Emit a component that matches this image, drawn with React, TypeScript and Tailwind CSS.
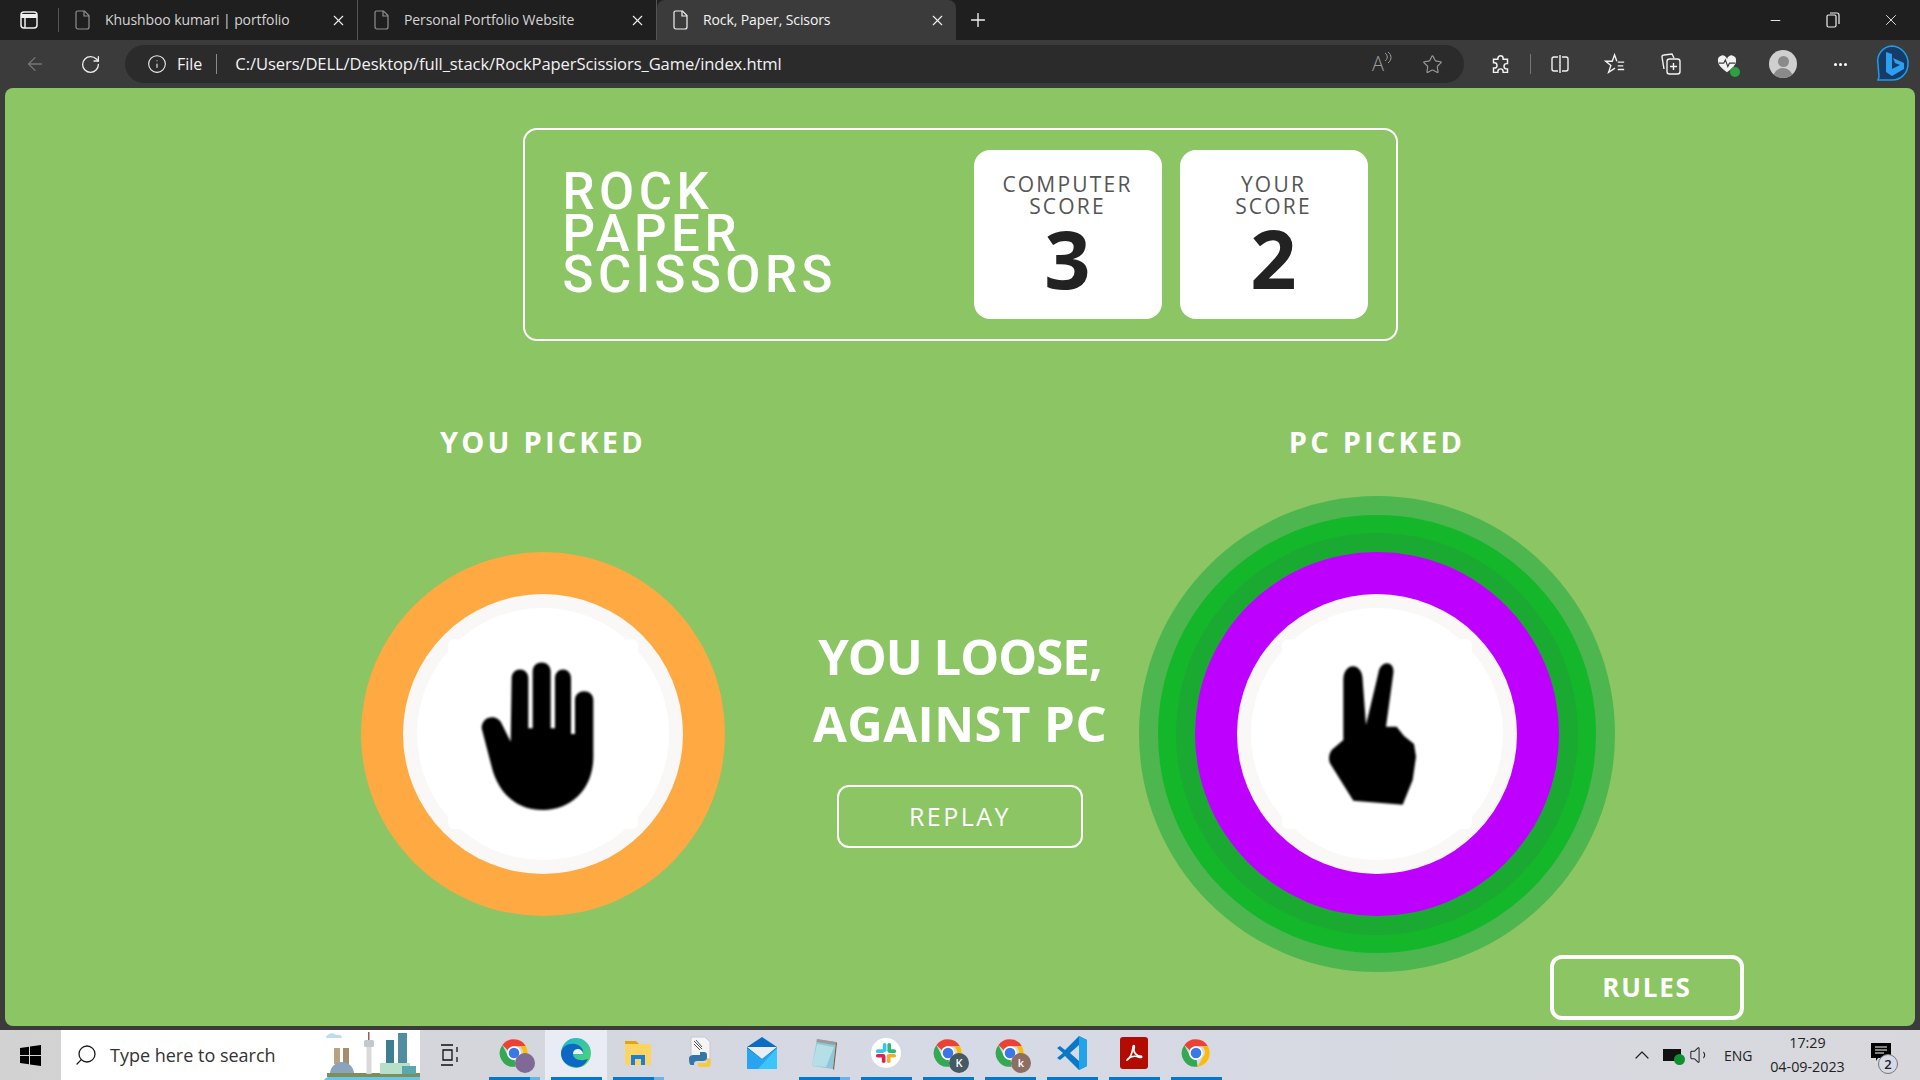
import { ArrowLeft, ChevronUp, Info, Minus, Plus, RotateCw, Search, Star, Volume1, X } from "lucide-react";

const tabs = [
  { title: "Khushboo kumari | portfolio", active: false },
  { title: "Personal Portfolio Website", active: false },
  { title: "Rock, Paper, Scisors", active: true },
];

const PageIcon = ({ active }: { active: boolean }) => (
  <svg width="16" height="20" viewBox="0 0 16 20" fill="none" stroke={active ? "#f2f2f2" : "#8f8f8f"} strokeWidth="1.2">
    <path d="M2.5 1h7l4.5 4.5V17a2 2 0 0 1-2 2H3a2 2 0 0 1-2-2V2.5A1.5 1.5 0 0 1 2.5 1z" />
    <path d="M9 1v5h5" />
  </svg>
);

const Tab = ({ title, active }: { title: string; active: boolean }) => (
  <div
    className={`w-[299px] h-10 flex items-center pl-4 pr-[10px] text-[14px] font-['Open_Sans',sans-serif] ${
      active ? "bg-[#3b3b3b] rounded-t-lg text-[#f4f4f4]" : "text-[#d4d4d4] border-r border-[#555555]"
    }`}
  >
    <PageIcon active={active} />
    <span className="ml-[14px] flex-1 truncate tracking-[-0.1px] pb-[2px]">{title}</span>
    <X size={17} strokeWidth={1.5} className="text-[#f0f0f0]" />
  </div>
);

const ToolCell = ({ children, w = "w-[56px]" }: { children: React.ReactNode; w?: string }) => (
  <div className={`${w} h-full flex items-center justify-center shrink-0`}>{children}</div>
);

const ChromeIcon = ({ badge, badgeColor }: { badge?: string; badgeColor?: string }) => (
  <div className="relative w-[30px] h-[36px] flex items-center justify-center">
    <svg width="30" height="30" viewBox="0 0 48 48">
      <path d="M24 2a22 22 0 0 1 19 11H24a11 11 0 0 0-10 6.5L5.5 11A22 22 0 0 1 24 2z" fill="#ea4335" />
      <path d="M43 13a22 22 0 0 1-16.500 32.800L35.500 30A11 11 0 0 0 33 13z" fill="#fbbc04" />
      <path d="M26.500 45.800A22 22 0 0 1 5.500 11L14.500 29A11 11 0 0 0 25 35z" fill="#34a853" />
      <circle cx="24" cy="24" r="11" fill="#fff" />
      <circle cx="24" cy="24" r="8.500" fill="#3b78e7" />
    </svg>
    {badge !== undefined && (
      <span
        className={`absolute right-[-6px] bottom-[-2px] w-5 h-5 rounded-full flex items-center justify-center text-[11px] text-white font-['Open_Sans',sans-serif] font-semibold ${badgeColor}`}
      >
        {badge}
      </span>
    )}
  </div>
);

const EdgeIcon = () => (
  <svg width="32" height="32" viewBox="0 0 32 32">
    <defs>
      <linearGradient id="edgeTop" x1="0" y1="0" x2="1" y2="1">
        <stop offset="0" stopColor="#1fb5d6" />
        <stop offset="1" stopColor="#54d66a" />
      </linearGradient>
    </defs>
    <circle cx="16" cy="16" r="15" fill="url(#edgeTop)" />
    <path d="M1 16C2 9 9 6 15 7c6 1 9 6 8 10H13c0 4 5 7 11 6l4-1c-3 6-8 9-13 8C7 29 1 24 1 16z" fill="#0c68c4" />
    <path d="M13 17c0-4 3-5 5-5s5 2 5 5z" fill="#e9f1fa" />
  </svg>
);

const FolderIcon = () => (
  <svg width="30" height="32" viewBox="0 0 30 32">
    <path d="M2 4h11l3 3H2z" fill="#e5a50a" />
    <rect x="2" y="7" width="26" height="21" rx="1.500" fill="#fcd462" />
    <path d="M8 28V18h14v10h-4v-6h-6v6z" fill="#1c7ed6" />
  </svg>
);

const PythonFile = () => (
  <svg width="30" height="36" viewBox="0 0 30 36">
    <path d="M6 2h14l5 5v18H6z" fill="#f4f4f4" stroke="#c8c8c8" />
    <path d="M9 6l8 8M11 5l6 7M9 9l6 6" stroke="#555" strokeWidth="1" />
    <path d="M4 24c0-3 2-4 5-4h6v-3h4c2 0 3 1 3 3v3c0 2-2 3-4 3h-6c-2 0-3 1-3 3v1H6c-1 0-2-2-2-6z" fill="#3775a9" />
    <path d="M22 23c3 0 4 2 4 4 0 3-1 5-3 5h-7c-2 0-3-1-3-2v-2h7c1 0 2-1 2-2z" fill="#f7c93e" />
  </svg>
);

const MailIcon = () => (
  <svg width="32" height="36" viewBox="0 0 32 36">
    <path d="M1 12L16 2l15 10v22H1z" fill="#0a6cc2" />
    <path d="M1 12h30L16 24z" fill="#e9eef2" />
    <path d="M1 13l15 11 15-11v21H1z" fill="#2aa4ee" />
    <path d="M31 13v21H12z" fill="#3cc5f9" />
  </svg>
);

const NotepadIcon = () => (
  <svg width="30" height="34" viewBox="0 0 30 34">
    <path d="M8 3l19 3-3 27-21-3z" fill="#8dc7d8" />
    <path d="M8 3l19 3-.5 3L7.500 6z" fill="#9a9a9a" />
    <path d="M27 6l1 1-3 27-1-1z" fill="#7a5d3d" />
    <path d="M8 8l17 3-8 20-14-1z" fill="#bfe3ea" opacity="0.8" />
  </svg>
);

const SlackIcon = () => (
  <div className="w-[30px] h-[30px] rounded-full bg-white flex items-center justify-center">
    <svg width="22" height="22" viewBox="0 0 24 24">
      <rect x="8.500" y="1" width="4" height="10" rx="2" fill="#36c5f0" />
      <rect x="1" y="8" width="9" height="4" rx="2" fill="#36c5f0" />
      <rect x="13.500" y="1" width="4" height="10" rx="2" fill="#2eb67d" />
      <rect x="14" y="8" width="9" height="4" rx="2" fill="#2eb67d" />
      <rect x="13" y="13" width="10" height="4" rx="2" fill="#ecb22e" />
      <rect x="13" y="14" width="4" height="9" rx="2" fill="#ecb22e" />
      <rect x="1" y="13" width="10" height="4" rx="2" fill="#e01e5a" />
      <rect x="7.500" y="14" width="4" height="9" rx="2" fill="#e01e5a" />
    </svg>
  </div>
);

const VsCodeIcon = () => (
  <svg width="32" height="36" viewBox="0 0 32 36">
    <path d="M23 1l8 4v26l-8 4L9 21l-5 4-3-2 6-5-6-5 3-2 5 4z" fill="#0a78c8" />
    <path d="M23 1l8 4v26l-8 4z" fill="#22a2e8" />
    <path d="M23 10v16l-9-8z" fill="#d6dae6" />
  </svg>
);

const AcrobatIcon = () => (
  <div className="w-7 h-8 rounded-[3px] bg-[#b30b00] flex items-center justify-center">
    <svg width="20" height="20" viewBox="0 0 24 24" fill="none" stroke="#fff" strokeWidth="2">
      <path d="M3 21c4-2 7-9 8-17 1-2 2 0 1 3-1 4 3 9 9 9 1 1-1 2-3 1-5-2-9-1-12 1-2 2-3 3-3 3z" />
    </svg>
  </div>
);

const TaskItem = ({
  children,
  stacked,
  active,
}: {
  children: React.ReactNode;
  stacked?: boolean;
  active?: boolean;
}) => (
  <div className={`w-[62px] h-full relative flex items-center justify-center pb-1 ${active ? "bg-[#e9ecf4]" : ""}`}>
    {children}
    <div className="absolute bottom-0 left-[6px] w-[51px] h-[3px] flex">
      <div className="flex-1 bg-[#0078d4]" />
      {stacked && <div className="w-[10px] bg-[#6cb2ea]" />}
    </div>
  </div>
);

const Skyline = () => (
  <svg width="96" height="50" viewBox="0 0 96 50" className="shrink-0">
    <path d="M0 50c2-3 6-4 10-4h86v4z" fill="#6cc4e8" />
    <path d="M2 7c2-4 7-5 10-2 3-1 6 0 6 3H2z" fill="#bcdcef" />
    <rect x="10" y="18" width="6" height="16" fill="#b7a282" />
    <rect x="19" y="18" width="6" height="16" fill="#a58e6e" />
    <path d="M6 44a12 12 0 0 1 24 0z" fill="#8aa4bd" />
    <rect x="3" y="43" width="93" height="4" fill="#7f8f58" />
    <rect x="44" y="2" width="1.500" height="10" fill="#a55" />
    <rect x="40" y="10" width="10" height="7" rx="1.500" fill="#c3c9ce" />
    <rect x="42.500" y="17" width="5" height="27" fill="#d9d9d9" />
    <rect x="62" y="10" width="8" height="24" fill="#3d7f90" />
    <rect x="74" y="3" width="9" height="31" fill="#4f8ea0" />
    <rect x="56" y="33" width="30" height="11" fill="#b8dfc8" />
    <rect x="78" y="36" width="14" height="8" fill="#5aa7ae" />
  </svg>
);

// blurred on purpose, the reference photo of the hands is a scaled up png
const PaperHand = () => (
  <svg width="190" height="190" viewBox="24 27 570 570" className="blur-[1px]">
    <path d="M125 295C125 255 175 250 187 285L212 335L215 145C215 110 265 110 265 145L265 295L278 295L278 125C278 88 332 88 332 125L332 295L345 295L345 145C345 110 393 110 393 145L393 312L405 312L405 210C405 175 460 175 460 210L460 380C460 480 390 540 310 540C230 540 175 490 155 410Z" />
  </svg>
);

const ScissorsHand = () => (
  <svg width="190" height="190" viewBox="6 27 570 570" className="blur-[1px]">
    <path d="M190 150C190 95 248 95 248 150L258 285L295 130C300 90 345 90 340 130L318 290L350 290L372 318L402 342L408 380L398 450L368 524L220 512L150 400Q142 378 155 360L190 330Z" />
  </svg>
);

const Pick = ({ ring, rings, children }: { ring: string; rings?: boolean; children: React.ReactNode }) => (
  <div className={`w-[364px] h-[364px] rounded-full flex items-center justify-center ${ring} ${rings ? "shadow-[0_0_0_19px_#1aaa31,0_0_0_37px_#15b72a,0_0_0_56px_#4db64f]" : ""}`}>
    <div className="w-[280px] h-[280px] rounded-full bg-[#faf8f7] flex items-center justify-center">
      <div className="w-[252px] h-[252px] rounded-full bg-white flex items-center justify-center">
        <div className="w-[190px] h-[190px] rounded-md bg-white shrink-0">{children}</div>
      </div>
    </div>
  </div>
);

const ScoreCard = ({ lines, score }: { lines: string[]; score: number }) => (
  <div className="w-[188px] h-[169px] rounded-2xl bg-white flex flex-col items-center pt-[23px]">
    {lines.map((line) => (
      <div key={line} className="text-[21px] leading-[22px] tracking-[2.2px] text-[#555555]">
        {line}
      </div>
    ))}
    <div className="text-[81px] leading-[84px] font-bold text-[#222222] -mt-[1px]">{score}</div>
  </div>
);

export default function App() {
  return (
    <div className="w-full h-screen overflow-hidden flex flex-col bg-[#3b3b3b] font-['Open_Sans',sans-serif]">
      {/* tab strip */}
      <div className="h-10 shrink-0 flex bg-[#1f1f1f]">
        <div className="w-[59px] flex items-center justify-center border-r border-[#555555] my-2">
          <svg width="18" height="18" viewBox="0 0 18 18" fill="none" stroke="#f0f0f0" strokeWidth="1.5">
            <rect x="1" y="1" width="16" height="16" rx="3" />
            <path d="M1 5h16" strokeWidth="4" />
            <path d="M5 5v12" />
          </svg>
        </div>
        {tabs.map((tab) => (
          <Tab key={tab.title} title={tab.title} active={tab.active} />
        ))}
        <div className="w-11 flex items-center justify-center">
          <Plus size={22} strokeWidth={1.5} className="text-[#f0f0f0]" />
        </div>
        <div className="flex-1" />
        <div className="flex items-center text-[#f0f0f0]">
          <div className="w-[58px] flex justify-center"><Minus size={15} strokeWidth={1.5} /></div>
          <div className="w-[58px] flex justify-center">
            <svg width="14" height="16" viewBox="0 0 14 16" fill="none" stroke="currentColor" strokeWidth="1.2">
              <rect x="1" y="3" width="9" height="12" rx="1.500" />
              <path d="M4 1h7a2 2 0 0 1 2 2v9" />
            </svg>
          </div>
          <div className="w-[58px] flex justify-center"><X size={18} strokeWidth={1.2} /></div>
        </div>
      </div>

      {/* toolbar */}
      <div className="h-12 shrink-0 flex items-center bg-[#3b3b3b]">
        <div className="w-[70px] flex justify-center"><ArrowLeft size={22} strokeWidth={1.4} className="text-[#777777]" /></div>
        <div className="w-[40px] flex justify-center"><RotateCw size={21} strokeWidth={1.5} className="text-[#eeeeee]" /></div>
        <div className="w-[15px]" />
        <div className="w-[1339px] h-[38px] rounded-[19px] bg-[#2b2b2b] flex items-center pl-[22px] text-[#f2f2f2]">
          <Info size={20} strokeWidth={1.3} />
          <span className="ml-[10px] text-[16px]">File</span>
          <span className="ml-[14px] w-px h-[20px] bg-[#8a8a8a]" />
          <span className="ml-[18px] text-[16.600px] tracking-[-0.1px]">C:/Users/DELL/Desktop/full_stack/RockPaperScissiors_Game/index.html</span>
          <div className="flex-1" />
          <span className="flex items-start text-[#9a9a9a] mr-[30px]">
            <span className="text-[20px] leading-[24px] font-light">A</span>
            <svg width="8" height="12" viewBox="0 0 8 12" fill="none" stroke="currentColor" strokeWidth="1">
              <path d="M1 1c3 2 3 6 0 8M4 0c4 3 4 8 0 11" />
            </svg>
          </span>
          <Star size={21} strokeWidth={1.3} className="text-[#9a9a9a] mr-[21px]" />
        </div>
        <div className="flex-1 h-full flex items-center justify-end text-[#f2f2f2]">
          <ToolCell>
            <svg width="21" height="21" viewBox="0 0 24 24" fill="none" stroke="currentColor" strokeWidth="1.700">
              <path d="M9 5a3 3 0 0 1 6 0v1h5v5h-1a3 3 0 0 0 0 6h1v4h-5v-1a3 3 0 0 0-6 0v1H4v-5h1a3 3 0 0 0 0-6H4V6h5z" />
            </svg>
          </ToolCell>
          <div className="w-px h-5 bg-[#777777] mx-[2px]" />
          <ToolCell w="w-[54px]">
            <svg width="20" height="20" viewBox="0 0 20 20" fill="none" stroke="currentColor" strokeWidth="1.400">
              <path d="M8 3H4a2 2 0 0 0-2 2v10a2 2 0 0 0 2 2h4M12 3h4a2 2 0 0 1 2 2v10a2 2 0 0 1-2 2h-4M10 1v18" />
            </svg>
          </ToolCell>
          <ToolCell>
            <svg width="22" height="22" viewBox="0 0 24 24" fill="none" stroke="currentColor" strokeWidth="1.500">
              <path d="M14 9l-2.500-7L9 9H2l5.500 4.500L5 21l7-4.500M15 10h7M15 14h6M15 18h7" />
            </svg>
          </ToolCell>
          <ToolCell>
            <svg width="22" height="24" viewBox="0 0 22 24" fill="none" stroke="currentColor" strokeWidth="1.400">
              <path d="M4 17L2 5a2 2 0 0 1 2-2l8-1 2 4" />
              <rect x="7" y="7" width="13" height="15" rx="2.500" />
              <path d="M13.500 11v7M10 14.500h7" />
            </svg>
          </ToolCell>
          <ToolCell>
            <div className="relative">
              <svg width="20" height="18" viewBox="0 0 24 22" fill="#f2f2f2">
                <path d="M12 21C5 16 1 12 1 7a5.500 5.500 0 0 1 11-2 5.500 5.500 0 0 1 11 2c0 5-4 9-11 14z" />
                <path d="M2 10h6l2-4 3 8 2-4h7" stroke="#3b3b3b" strokeWidth="1.400" fill="none" />
              </svg>
              <span className="absolute right-[-3px] bottom-[-4px] w-[10px] h-[10px] rounded-full bg-[#2ea043]" />
            </div>
          </ToolCell>
          <ToolCell>
            <div className="w-7 h-7 rounded-full bg-[#cfcfcf] flex flex-col items-center justify-end overflow-hidden">
              <div className="w-[11px] h-[11px] rounded-full bg-[#8a8a8a] mb-[1px]" />
              <div className="w-[20px] h-[10px] rounded-t-full bg-[#8a8a8a]" />
            </div>
          </ToolCell>
          <ToolCell w="w-[58px]">
            <div className="flex gap-[2px]">
              <span className="w-[3px] h-[3px] rounded-full bg-white" />
              <span className="w-[3px] h-[3px] rounded-full bg-white" />
              <span className="w-[3px] h-[3px] rounded-full bg-white" />
            </div>
          </ToolCell>
          <ToolCell w="w-[51px]">
            <svg width="40" height="40" viewBox="0 0 40 40" fill="none" className="-translate-x-[3px]">
              <path d="M20 2a17 17 0 0 1 16 18c0 9-7 16-16 16H6l1-3-1-13A15 15 0 0 1 20 2z" fill="#173a66" stroke="#1a9fe8" strokeWidth="1.500" />
              <path d="M14 8l6 2v15l8-4-5-2-2-5 11 5v6l-12 7-6-4z" fill="#2ba0f0" />
            </svg>
          </ToolCell>
        </div>
      </div>

      {/* the game page */}
      <div className="h-[938px] mx-[5px] rounded-lg bg-[#8cc563] shrink-0 relative flex flex-col items-center pt-[40px] font-['Open_Sans',sans-serif]">
        <div className="w-[875px] h-[213px] shrink-0 border-2 border-white rounded-[14px] flex items-center pl-[38px] pr-[28px]">
          <h1 className="flex-1 -mt-[2px] font-['Roboto',sans-serif] font-medium text-[51px] leading-[41.500px] tracking-[4.500px] text-white">
            ROCK
            <br />
            PAPER
            <br />
            SCISSORS
          </h1>
          <div className="flex gap-[18px]">
            <ScoreCard lines={["COMPUTER", "SCORE"]} score={3} />
            <ScoreCard lines={["YOUR", "SCORE"]} score={2} />
          </div>
        </div>

        <div className="flex mt-[79px]">
          <div className="w-[364px] flex flex-col items-center">
            <div className="h-[44px] leading-[44px] text-[29px] font-bold tracking-[3.200px] text-white">YOU PICKED</div>
            <div className="mt-[88px]">
              <Pick ring="bg-[#ffa943]"><PaperHand /></Pick>
            </div>
          </div>
          <div className="w-[470px] flex flex-col items-center pt-[203px]">
            <div className="text-[49px] leading-[67px] font-bold tracking-[-1px] text-white text-center">
              YOU LOOSE,
              <br />
              <span className="tracking-[0.5px]">AGAINST PC</span>
            </div>
            <button className="w-[246px] h-[63px] mt-[28px] border-2 border-white rounded-xl text-[25px] tracking-[2.500px] text-white">
              REPLAY
            </button>
          </div>
          <div className="w-[364px] flex flex-col items-center">
            <div className="h-[44px] leading-[44px] text-[29px] font-bold tracking-[3.200px] text-white">PC PICKED</div>
            <div className="mt-[88px]">
              <Pick ring="bg-[#bd00ff]" rings><ScissorsHand /></Pick>
            </div>
          </div>
        </div>

        <button className="absolute left-[1545px] top-[867px] w-[194px] h-[65px] border-4 border-white rounded-xl text-[26px] font-bold tracking-[1.800px] text-white">
          RULES
        </button>
      </div>
      <div className="h-1 shrink-0" />

      {/* windows taskbar */}
      <div className="flex-1 flex items-center bg-gradient-to-r from-[#d2d2d2] via-[#d6dae6] to-[#d8d8dc] text-[#1a1a1a]">
        <div className="w-[61px] h-full flex items-center justify-center">
          <svg width="21" height="21" viewBox="0 0 21 21" fill="#000">
            <path d="M0 3l9-1.300V10H0zM10 1.500L21 0v10H10zM0 11h9v8.300L0 18zM10 11h11v10l-11-1.500z" />
          </svg>
        </div>
        <div className="w-[359px] h-full bg-white flex items-center">
          <Search size={24} strokeWidth={1.3} className="ml-[13px] -scale-x-100" />
          <span className="ml-[12px] flex-1 text-[18px] text-[#333333]">Type here to search</span>
          <Skyline />
        </div>
        <div className="w-[63px] h-full flex items-center justify-center">
          <svg width="20" height="22" viewBox="0 0 20 22" fill="none" stroke="#111" strokeWidth="1.300" className="-translate-x-[2px]">
            <path d="M1 1h12M1 21h12M3 6h9v10H3zM17 3v5M17 13v5" />
          </svg>
        </div>
        <div className="flex h-full items-center">
          <TaskItem stacked><ChromeIcon badge="" badgeColor="bg-[#7f6a96]" /></TaskItem>
          <TaskItem active><EdgeIcon /></TaskItem>
          <TaskItem stacked><FolderIcon /></TaskItem>
          <div className="w-[62px] h-full flex items-center justify-center pb-1"><PythonFile /></div>
          <div className="w-[62px] h-full flex items-center justify-center pb-1"><MailIcon /></div>
          <TaskItem stacked><NotepadIcon /></TaskItem>
          <TaskItem><SlackIcon /></TaskItem>
          <TaskItem><ChromeIcon badge="K" badgeColor="bg-[#455a64]" /></TaskItem>
          <TaskItem><ChromeIcon badge="k" badgeColor="bg-[#8d6e63]" /></TaskItem>
          <TaskItem><VsCodeIcon /></TaskItem>
          <TaskItem><AcrobatIcon /></TaskItem>
          <TaskItem><ChromeIcon /></TaskItem>
        </div>
        <div className="flex-1" />
        <div className="flex items-center h-full text-[#222222]">
          <ChevronUp size={24} strokeWidth={1.2} className="mr-[9px]" />
          <div className="relative w-[18px] h-[12px] border-2 border-[#111] bg-[#111] mr-[8px]">
            <span className="absolute right-[-6px] bottom-[-6px] w-[11px] h-[11px] rounded-full bg-[#109030]" />
          </div>
          <Volume1 size={22} strokeWidth={1.1} className="mr-[13px]" />
          <span className="text-[14px] w-[31px]">ENG</span>
          <div className="w-[105px] text-center text-[14.300px] leading-[24px]">
            <div>17:29</div>
            <div>04-09-2023</div>
          </div>
          <div className="relative w-[60px] flex justify-center">
            <svg width="22" height="20" viewBox="0 0 22 20" fill="#000" className="-translate-x-[9px] -translate-y-[3px]">
              <path d="M1 1h20v15H8l-2 3v-3H1z" />
              <path d="M5 5h12M5 8h12M5 11h9" stroke="#fff" strokeWidth="1" />
            </svg>
            <span className="absolute left-[18px] top-[9px] w-5 h-5 rounded-full border border-[#777] bg-[#d6dae6] text-[13px] leading-[18px] text-center font-semibold">
              2
            </span>
          </div>
        </div>
      </div>
    </div>
  );
}
